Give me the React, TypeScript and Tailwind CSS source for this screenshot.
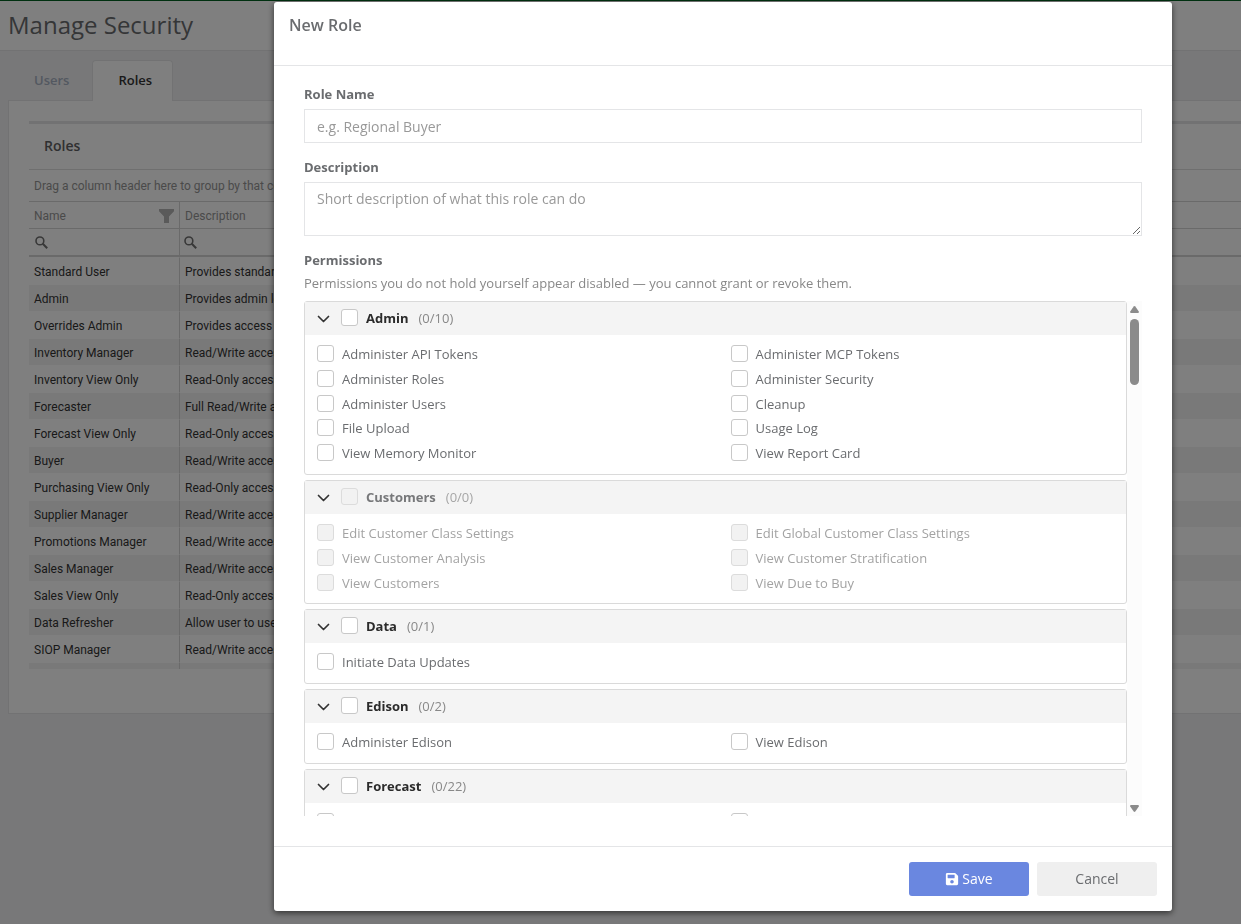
import { FaSave } from "react-icons/fa";

type Role = { name: string; description: string };
type Group = { name: string; total: number; disabled?: boolean; items: string[] };

const roles: Role[] = [
  { name: "Standard User", description: "Provides standard access" },
  { name: "Admin", description: "Provides admin level access" },
  { name: "Overrides Admin", description: "Provides access to overrides" },
  { name: "Inventory Manager", description: "Read/Write access to inventory" },
  { name: "Inventory View Only", description: "Read-Only access to inventory" },
  { name: "Forecaster", description: "Full Read/Write access" },
  { name: "Forecast View Only", description: "Read-Only access to forecasts" },
  { name: "Buyer", description: "Read/Write access to buying" },
  { name: "Purchasing View Only", description: "Read-Only access to buying" },
  { name: "Supplier Manager", description: "Read/Write access to suppliers" },
  { name: "Promotions Manager", description: "Read/Write access to promotions" },
  { name: "Sales Manager", description: "Read/Write access to sales" },
  { name: "Sales View Only", description: "Read-Only access to sales" },
  { name: "Data Refresher", description: "Allow user to use refresh" },
  { name: "SIOP Manager", description: "Read/Write access to SIOP" },
  { name: "", description: "" },
];

const groups: Group[] = [
  {
    name: "Admin",
    total: 10,
    items: [
      "Administer API Tokens",
      "Administer MCP Tokens",
      "Administer Roles",
      "Administer Security",
      "Administer Users",
      "Cleanup",
      "File Upload",
      "Usage Log",
      "View Memory Monitor",
      "View Report Card",
    ],
  },
  {
    name: "Customers",
    total: 0,
    disabled: true,
    items: [
      "Edit Customer Class Settings",
      "Edit Global Customer Class Settings",
      "View Customer Analysis",
      "View Customer Stratification",
      "View Customers",
      "View Due to Buy",
    ],
  },
  { name: "Data", total: 1, items: ["Initiate Data Updates"] },
  { name: "Edison", total: 2, items: ["Administer Edison", "View Edison"] },
  { name: "Forecast", total: 22, items: ["Edit Forecast", "View Forecast"] },
];

function SearchIcon() {
  return (
    <svg width="13" height="13" viewBox="0 0 13 13" fill="none" stroke="#707070" aria-hidden="true">
      <circle cx="4.9" cy="4.9" r="3.9" strokeWidth="1.6" />
      <path d="M7.8 7.8 12.2 12.2" strokeWidth="2" />
    </svg>
  );
}

function FilterIcon() {
  return (
    <svg width="15" height="14" viewBox="0 0 15 14" fill="#b4b4b4" aria-hidden="true">
      <path d="M0 0h15v2.2L10 7.6V14H5V7.6L0 2.2z" />
    </svg>
  );
}

function Chevron() {
  return (
    <svg width="13" height="13" viewBox="0 0 13 13" fill="none" stroke="#333" strokeWidth="1.7" strokeLinecap="round" strokeLinejoin="round" aria-hidden="true">
      <path d="M1.5 5.5 6.5 10.5 11.5 5.5" />
    </svg>
  );
}

function Tick({ id, disabled, label }: { id?: string; disabled?: boolean; label?: string }) {
  return (
    <input
      type="checkbox"
      id={id}
      aria-label={label}
      disabled={disabled}
      className="size-[17px] shrink-0 appearance-none rounded-[3px] border border-[#c8c8c8] bg-white disabled:border-[#dcdcdc] disabled:bg-[#f2f2f2]"
    />
  );
}

function PermissionGroup({ group }: { group: Group }) {
  return (
    <section className="rounded-[3px] border border-[#dadada]">
      <header className="flex h-[33px] items-center bg-[#f4f4f4] px-3 pb-[2px]">
        <button type="button" aria-label={`Collapse ${group.name}`} className="mr-[11px]">
          <Chevron />
        </button>
        <Tick disabled={group.disabled} label={`All ${group.name} permissions`} />
        <h3 className={group.disabled ? "ml-2 font-bold text-[#77787a]" : "ml-2 font-bold text-[#2b2b2b]"}>{group.name}</h3>
        <span className={group.disabled ? "ml-[10px] text-[#a6a6a6]" : "ml-[10px] text-[#888]"}>(0/{group.total})</span>
      </header>
      <div className="grid auto-rows-[25px_25px_24px] grid-cols-2 gap-x-[30px] px-3 pt-[9px] pb-[6px]">
        {group.items.map((item) => (
          <div key={item} className="flex items-start gap-2">
            <span className="flex pt-px">
              <Tick id={item} disabled={group.disabled} />
            </span>
            <label htmlFor={item} className={group.disabled ? "text-[#a3a3a3]" : "text-[#6a6c6f]"}>
              {item}
            </label>
          </div>
        ))}
      </div>
    </section>
  );
}

function SecurityPage() {
  return (
    <div className="min-h-screen border-t border-[#006020] bg-[#f1f1f2] pb-[210px]">
      <header className="flex h-[50px] items-center border-b border-[#e4e5e7] bg-white px-2 pb-[2px]">
        <h1 className="text-[24px] text-[#6a6c6f]">Manage Security</h1>
      </header>
      <nav className="flex px-2 pt-[9px] text-[13px] font-semibold">
        <button type="button" className="-mb-px h-[41px] pr-[23px] pl-[26px] text-[#a7b1c2]">
          Users
        </button>
        <button type="button" className="relative -mb-px h-[41px] rounded-t border border-b-0 border-[#e4e5e7] bg-white pr-5 pl-[25px] text-[#333]">
          Roles
        </button>
      </nav>
      <main className="ml-2 border border-r-0 border-[#e4e5e7] bg-white pt-5 pb-11 pl-5">
        <section className="border-t-[3px] border-[#e4e5e7]">
          <h2 className="flex h-[45px] items-center px-[15px] pb-[2px] text-[14px] font-semibold text-[#5f6163]">Roles</h2>
          <p className="flex h-8 items-center border-t border-[#dfdfdf] px-[5px] font-[Roboto,sans-serif] text-[12px] text-[#959595]">
            Drag a column header here to group by that column
          </p>
          <div className="h-[468px] overflow-hidden border-t border-[#d4d4d4]">
            <table className="w-full table-fixed border-separate border-spacing-0 text-left font-[Roboto,sans-serif] text-[12px] text-[#333]">
              <thead className="text-[#959595]">
                <tr className="h-[27px]">
                  <th className="w-[151px] border-r border-b border-[#d4d4d4] px-[5px] pt-[2px] pb-0 font-normal">
                    <div className="flex items-center justify-between">
                      Name
                      <FilterIcon />
                    </div>
                  </th>
                  <th className="border-b border-[#d4d4d4] px-[5px] pt-[2px] pb-0 font-normal">Description</th>
                </tr>
                <tr className="h-7">
                  <td className="border-r border-b-2 border-[#d4d4d4] px-[6px] py-0">
                    <SearchIcon />
                  </td>
                  <td className="border-b-2 border-[#d4d4d4] px-[4px] py-0">
                    <SearchIcon />
                  </td>
                </tr>
              </thead>
              <tbody>
                {roles.map((role, i) => (
                  <tr key={i} className="h-[27px] even:bg-[#f3f3f3]">
                    <td className="border-t border-r border-t-white border-r-[#d4d4d4] px-[5px] pt-[2px] pb-0">{role.name}</td>
                    <td className="border-t border-white px-[5px] pt-[2px] pb-0">{role.description}</td>
                  </tr>
                ))}
              </tbody>
            </table>
          </div>
        </section>
      </main>
    </div>
  );
}

function NewRoleDialog() {
  return (
    <div className="fixed inset-0 flex items-start overflow-hidden bg-black/50 pt-[2px] pr-[69px] pl-[274px]">
      <form
        role="dialog"
        aria-labelledby="dialog-title"
        className="min-w-0 flex-1 rounded-[3px] bg-white text-[13px] leading-5 text-[#6a6c6f] shadow-[0_2px_6px_rgba(0,0,0,0.6)]"
      >
        <header className="h-16 border-b border-[#e4e5e7] px-[15px] pt-[11px]">
          <h2 id="dialog-title" className="text-[16px] leading-6 font-semibold">
            New Role
          </h2>
        </header>
        <div className="px-[30px] pt-[18px] pb-[30px]">
          <label htmlFor="role-name" className="mb-[5px] block font-bold">
            Role Name
          </label>
          <input
            id="role-name"
            type="text"
            placeholder="e.g. Regional Buyer"
            className="mb-[14px] block h-[34px] w-full border border-[#e4e5e7] px-3 text-[14px] placeholder:text-[#999]"
          />
          <label htmlFor="description" className="mb-[5px] block font-bold">
            Description
          </label>
          <textarea
            id="description"
            placeholder="Short description of what this role can do"
            className="mb-[14px] block h-[54px] w-full resize-y border border-[#e4e5e7] px-3 py-[6px] text-[14px] leading-5 placeholder:text-[#999]"
          />
          <h3 className="font-bold">Permissions</h3>
          <p className="mt-[3px] mb-2 text-[#888]">
            Permissions you do not hold yourself appear disabled — you cannot grant or revoke them.
          </p>
          <div className="flex h-[515px]">
            <div className="flex min-w-0 flex-1 flex-col gap-[5px] overflow-y-auto [scrollbar-width:none]">
              {groups.map((group) => (
                <PermissionGroup key={group.name} group={group} />
              ))}
            </div>
            <div aria-hidden="true" className="flex w-[15px] flex-col items-center bg-[#fcfcfc] pt-[5px] pb-1">
              <svg width="9" height="7" viewBox="0 0 9 7" fill="#8b8b8b">
                <path d="M3.7.5Q4.5-.4 5.3.5L8.8 5.4Q9.2 7 8 7H1Q-.2 7 .2 5.4z" />
              </svg>
              <div className="mt-[6px] mb-auto h-[66px] w-[9px] rounded-full bg-[#8b8b8b]" />
              <svg width="9" height="7" viewBox="0 0 9 7" fill="#8b8b8b">
                <path d="M3.7 6.5Q4.5 7.4 5.3 6.5L8.8 1.6Q9.2 0 8 0H1Q-.2 0 .2 1.6z" />
              </svg>
            </div>
          </div>
        </div>
        <footer className="flex justify-end gap-2 border-t border-[#e4e5e7] p-[15px] text-[14px]">
          <button type="button" className="flex h-[34px] w-[120px] items-center justify-center gap-[3px] rounded-[3px] bg-[#6a87e0] text-white">
            <FaSave size={14} />
            Save
          </button>
          <button type="button" className="h-[34px] w-[120px] rounded-[3px] bg-[#efefef]">
            Cancel
          </button>
        </footer>
      </form>
    </div>
  );
}

export default function App() {
  return (
    <div className="font-['Open_Sans',sans-serif]">
      <SecurityPage />
      <NewRoleDialog />
    </div>
  );
}
